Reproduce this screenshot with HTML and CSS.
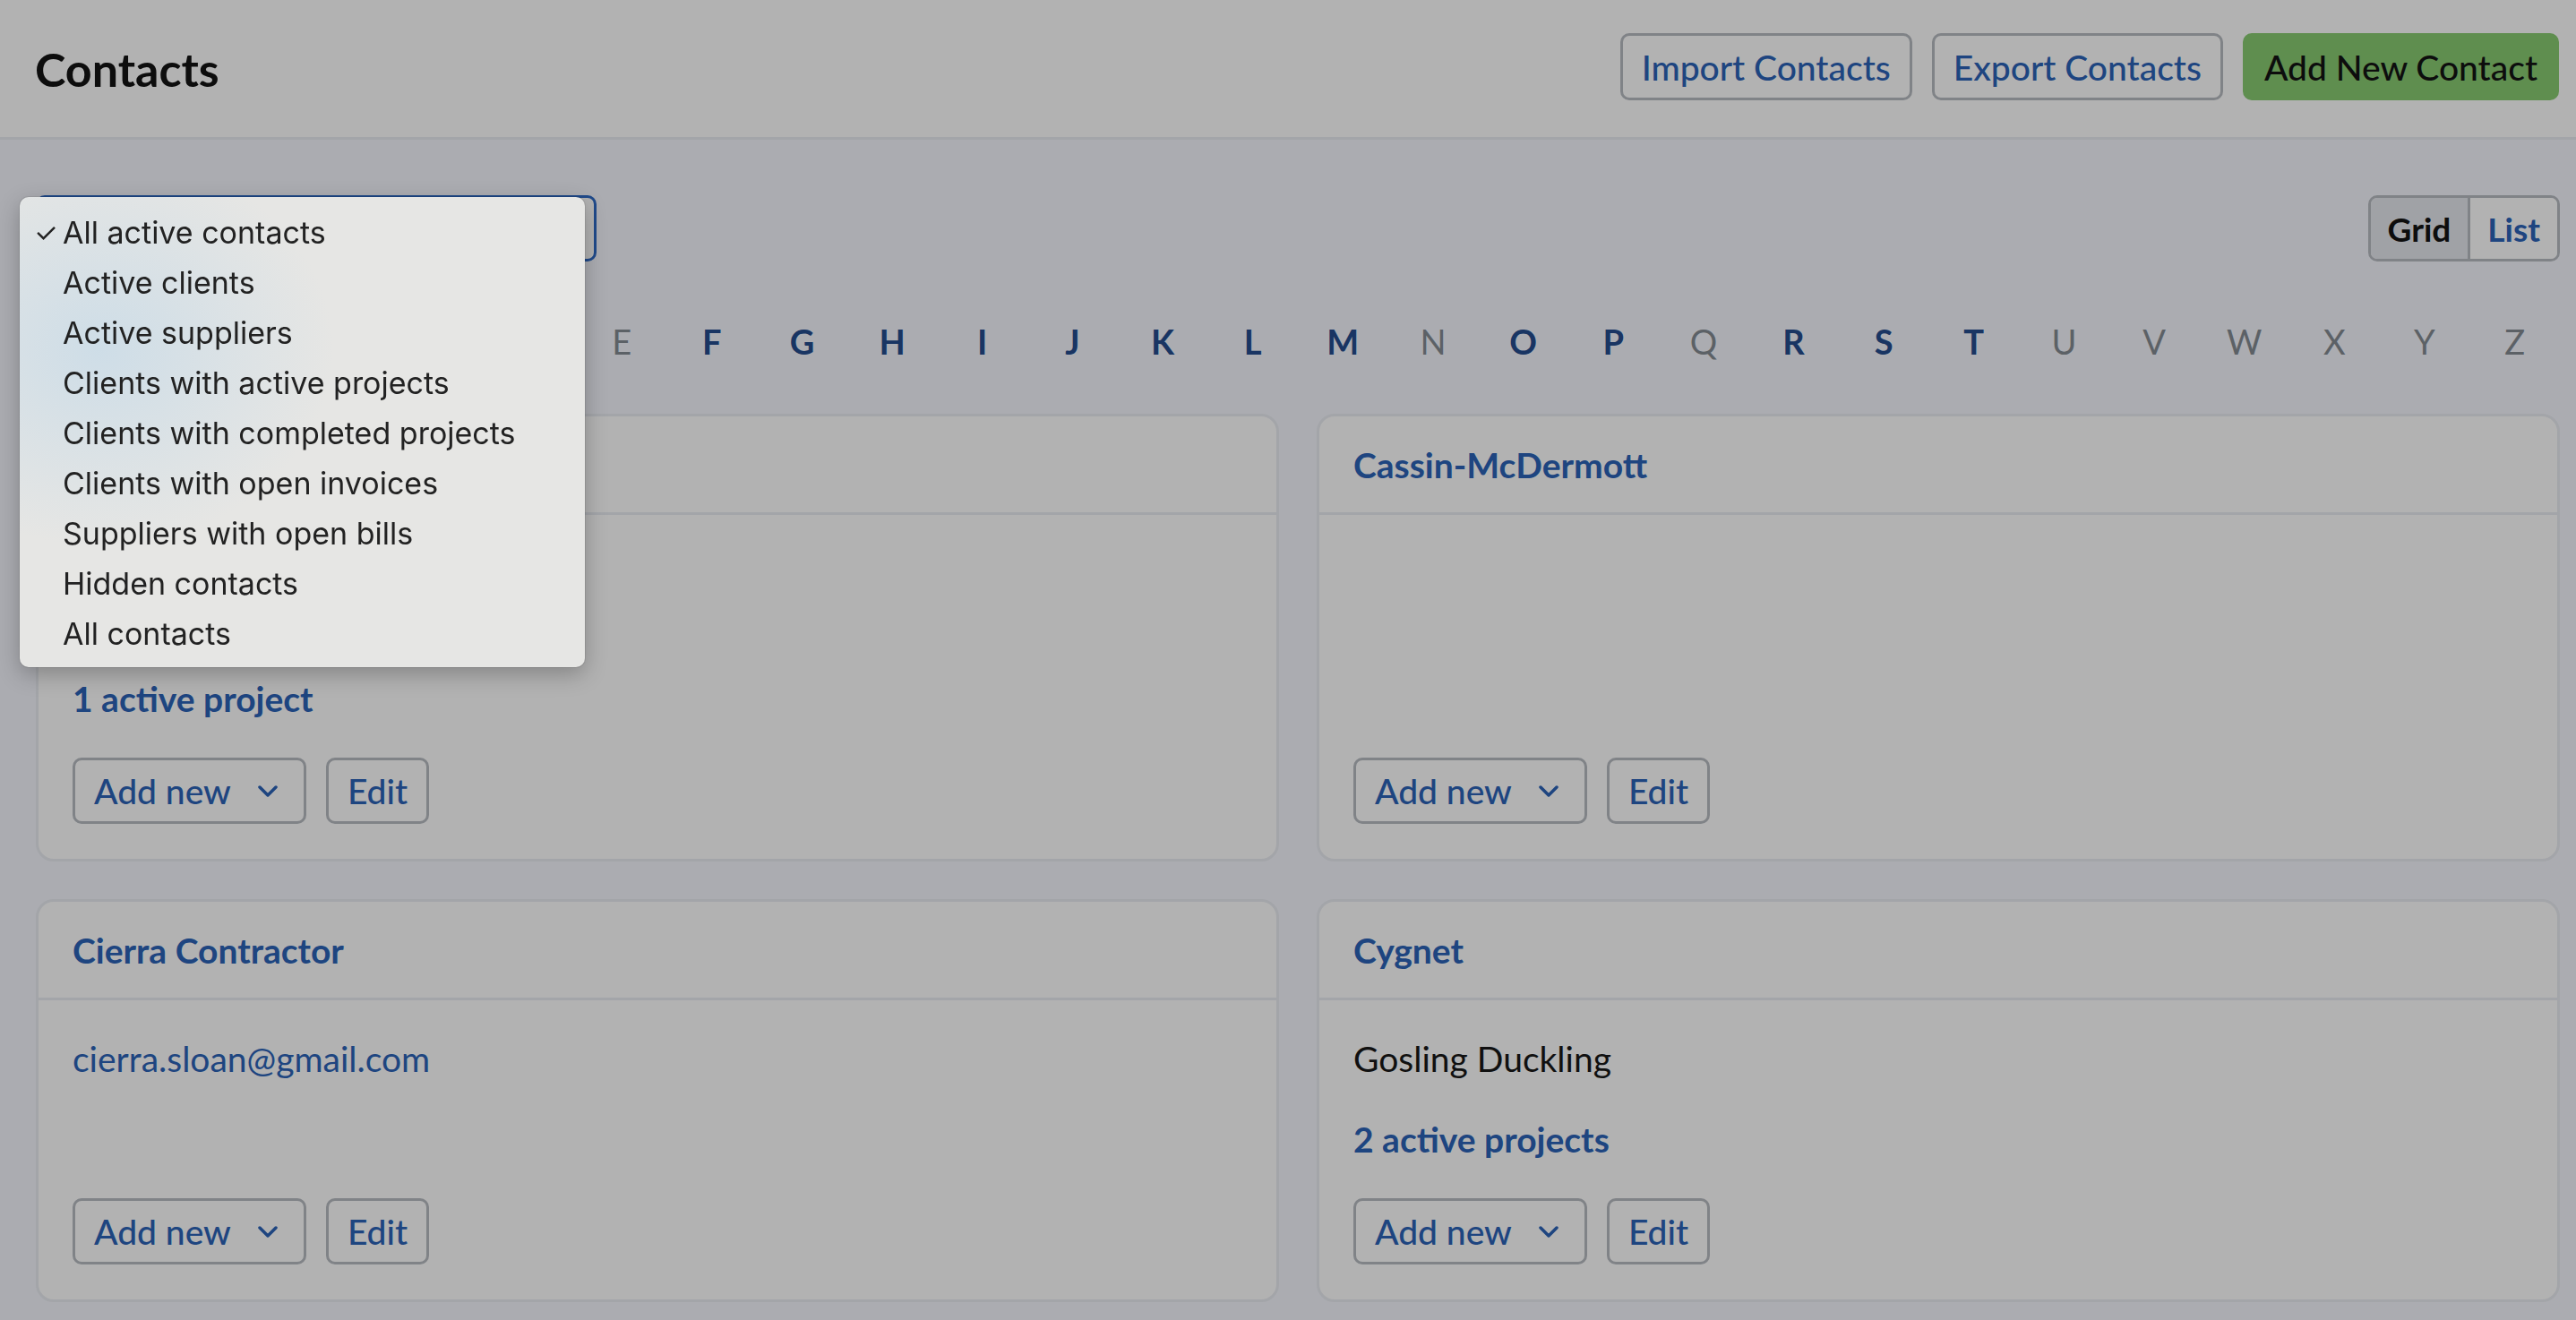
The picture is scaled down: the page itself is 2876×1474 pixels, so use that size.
FILE: index.html
```html
<!DOCTYPE html>
<html lang="en">
<head>
    <meta charset="UTF-8">
    <meta name="viewport" content="width=device-width, initial-scale=1.0">
    <title>Contacts</title>
    <link rel="stylesheet" href="styles.css">
</head>
<body>
    <!-- Page header -->
    <header class="topbar">
        <h1>Contacts</h1>
        <div class="actions">
            <button class="btn">Import Contacts</button>
            <button class="btn">Export Contacts</button>
            <button class="btn btn-primary">Add New Contact</button>
        </div>
    </header>

    <main class="content">
        <div class="toolbar">
            <div class="filter-select"><span class="covered">All active contacts</span></div>
            <div class="view-toggle">
                <span class="toggle-item active">Grid</span>
                <span class="toggle-item">List</span>
            </div>
        </div>

        <!-- Letter filter (first ones sit under the open menu) -->
        <nav class="alphabet">
            <a class="on covered">All</a><a class="on covered">#</a>
            <a class="on covered">A</a><a class="on covered">B</a><a class="on covered">C</a><a class="on covered">D</a>
            <a>E</a><a class="on">F</a><a class="on">G</a><a class="on">H</a>
            <a class="on">I</a><a class="on">J</a><a class="on">K</a><a class="on">L</a>
            <a class="on">M</a><a>N</a><a class="on">O</a><a class="on">P</a>
            <a>Q</a><a class="on">R</a><a class="on">S</a><a class="on">T</a>
            <a>U</a><a>V</a><a>W</a><a>X</a><a>Y</a><a>Z</a>
        </nav>

        <div class="cards">
            <div class="card">
                <div class="card-head"><a class="card-title covered">Acme Studio</a></div>
                <div class="card-body">
                    <div class="line covered">Anna Baker</div>
                    <div class="line link covered">anna@acme.com</div>
                    <a class="projects">1 active project</a>
                    <div class="card-actions">
                        <button class="btn btn-sm">Add new
                            <svg class="chev" viewBox="0 0 22 13"><polyline points="2,2 11,11 20,2"/></svg>
                        </button>
                        <button class="btn btn-sm">Edit</button>
                    </div>
                </div>
            </div>

            <div class="card">
                <div class="card-head"><a class="card-title">Cassin-McDermott</a></div>
                <div class="card-body">
                    <div class="card-actions">
                        <button class="btn btn-sm">Add new
                            <svg class="chev" viewBox="0 0 22 13"><polyline points="2,2 11,11 20,2"/></svg>
                        </button>
                        <button class="btn btn-sm">Edit</button>
                    </div>
                </div>
            </div>

            <div class="card">
                <div class="card-head"><a class="card-title">Cierra Contractor</a></div>
                <div class="card-body">
                    <div class="line link">cierra.sloan@gmail.com</div>
                    <div class="card-actions">
                        <button class="btn btn-sm">Add new
                            <svg class="chev" viewBox="0 0 22 13"><polyline points="2,2 11,11 20,2"/></svg>
                        </button>
                        <button class="btn btn-sm">Edit</button>
                    </div>
                </div>
            </div>

            <div class="card">
                <div class="card-head"><a class="card-title">Cygnet</a></div>
                <div class="card-body">
                    <div class="line">Gosling Duckling</div>
                    <a class="projects">2 active projects</a>
                    <div class="card-actions">
                        <button class="btn btn-sm">Add new
                            <svg class="chev" viewBox="0 0 22 13"><polyline points="2,2 11,11 20,2"/></svg>
                        </button>
                        <button class="btn btn-sm">Edit</button>
                    </div>
                </div>
            </div>
        </div>
    </main>

    <!-- Dimmed backdrop while the filter menu is open -->
    <div class="backdrop"></div>

    <ul class="select-menu">
        <li class="checked">All active contacts</li>
        <li>Active clients</li>
        <li>Active suppliers</li>
        <li>Clients with active projects</li>
        <li>Clients with completed projects</li>
        <li>Clients with open invoices</li>
        <li>Suppliers with open bills</li>
        <li>Hidden contacts</li>
        <li>All contacts</li>
    </ul>
</body>
</html>
```
FILE: styles.css
```css
html, body {
    margin: 0;
    padding: 0;
}
body {
    background: #f5f7fe;
    font-family: Lato, "Noto Sans", sans-serif;
    color: #181818;
    font-size: 39px;
}
.covered {
    visibility: hidden;
}
.topbar {
    display: flex;
    align-items: center;
    justify-content: space-between;
    height: 156px;
    box-sizing: border-box;
    padding: 0 19px 4px 39px;
    background: #fff;
    border-bottom: 3px solid #eaecf2;
}
.topbar h1 {
    margin: 4px 0 0;
    font-size: 52px;
    font-weight: 700;
    color: #141414;
}
.actions {
    display: flex;
    gap: 22px;
}
.btn {
    display: inline-flex;
    align-items: center;
    height: 75px;
    padding: 0 21px;
    font-family: inherit;
    font-size: 39px;
    font-weight: 500;
    color: #2c63b8;
    background: #fff;
    border: 3px solid #b8bcc2;
    border-radius: 10px;
    cursor: pointer;
}
.btn-primary {
    background: #88cc72;
    border-color: #88cc72;
    color: #141414;
}
.content {
    padding: 62px 18px 0 40px;
}
.toolbar {
    display: flex;
    justify-content: space-between;
    align-items: center;
}
.filter-select {
    width: 626px;
    height: 74px;
    box-sizing: border-box;
    padding: 0 24px;
    line-height: 68px;
    border: 3px solid #2f6bc6;
    border-radius: 10px;
    background: #fff;
}
.view-toggle {
    display: flex;
    height: 74px;
    border: 3px solid #b8bcc2;
    border-radius: 10px;
    overflow: hidden;
    box-sizing: border-box;
}
.toggle-item {
    display: flex;
    align-items: center;
    padding: 0 19px;
    font-size: 37px;
    font-weight: 700;
    color: #2c63b8;
    background: #fff;
}
.toggle-item.active {
    background: #e6e8ee;
    color: #141414;
    border-right: 3px solid #b8bcc2;
}
.alphabet {
    display: flex;
    margin: 64px 0 56px;
    height: 50px;
    align-items: center;
}
.alphabet a {
    flex: 1;
    text-align: center;
    font-size: 38px;
    color: #848b92;
}
.alphabet a.on {
    color: #244c8f;
    font-weight: 700;
}
.cards {
    display: grid;
    grid-template-columns: 1fr 1fr;
    gap: 42px;
}
.card {
    display: flex;
    flex-direction: column;
    background: #fff;
    border: 3px solid #eaecf2;
    border-radius: 20px;
}
.card-head {
    height: 107px;
    display: flex;
    align-items: center;
    padding: 0 38px;
    border-bottom: 3px solid #eaecf2;
}
.card-title {
    font-weight: 700;
    color: #2c63b8;
}
.card-body {
    flex: 1;
    display: flex;
    flex-direction: column;
    padding: 40px 38px 39px;
}
.line {
    line-height: 50px;
}
.line.link {
    color: #2c63b8;
}
.projects {
    display: block;
    margin-top: 40px;
    line-height: 50px;
    font-weight: 700;
    color: #2c63b8;
}
.card-actions {
    display: flex;
    gap: 22px;
    margin-top: auto;
    padding-top: 41px;
}
.btn-sm {
    height: 74px;
}
.chev {
    width: 22px;
    height: 13px;
    margin-left: 30px;
    margin-right: 8px;
    fill: none;
    stroke: #2c63b8;
    stroke-width: 3.5;
    stroke-linecap: round;
    stroke-linejoin: round;
}
.backdrop {
    position: fixed;
    inset: 0;
    background: rgba(0, 0, 0, 0.3);
}
.select-menu {
    position: absolute;
    left: 22px;
    top: 220px;
    width: 631px;
    margin: 0;
    padding: 12px 0 9px;
    list-style: none;
    box-sizing: border-box;
    background: #e6e6e4;
    background-image: radial-gradient(ellipse 260px 220px at 90px 170px, rgba(200, 219, 232, 0.8), rgba(230, 230, 228, 0));
    border-radius: 10px;
    box-shadow: 0 8px 24px rgba(0, 0, 0, 0.25), 0 0 0 1px rgba(0, 0, 0, 0.08);
    font-family: Inter, "Noto Sans", sans-serif;
    font-size: 34px;
    color: #222;
}
.select-menu li {
    height: 56px;
    line-height: 56px;
    padding-left: 48px;
    position: relative;
}
.select-menu li.checked::before {
    content: "\2713";
    position: absolute;
    left: 16px;
    font-size: 30px;
}
```
